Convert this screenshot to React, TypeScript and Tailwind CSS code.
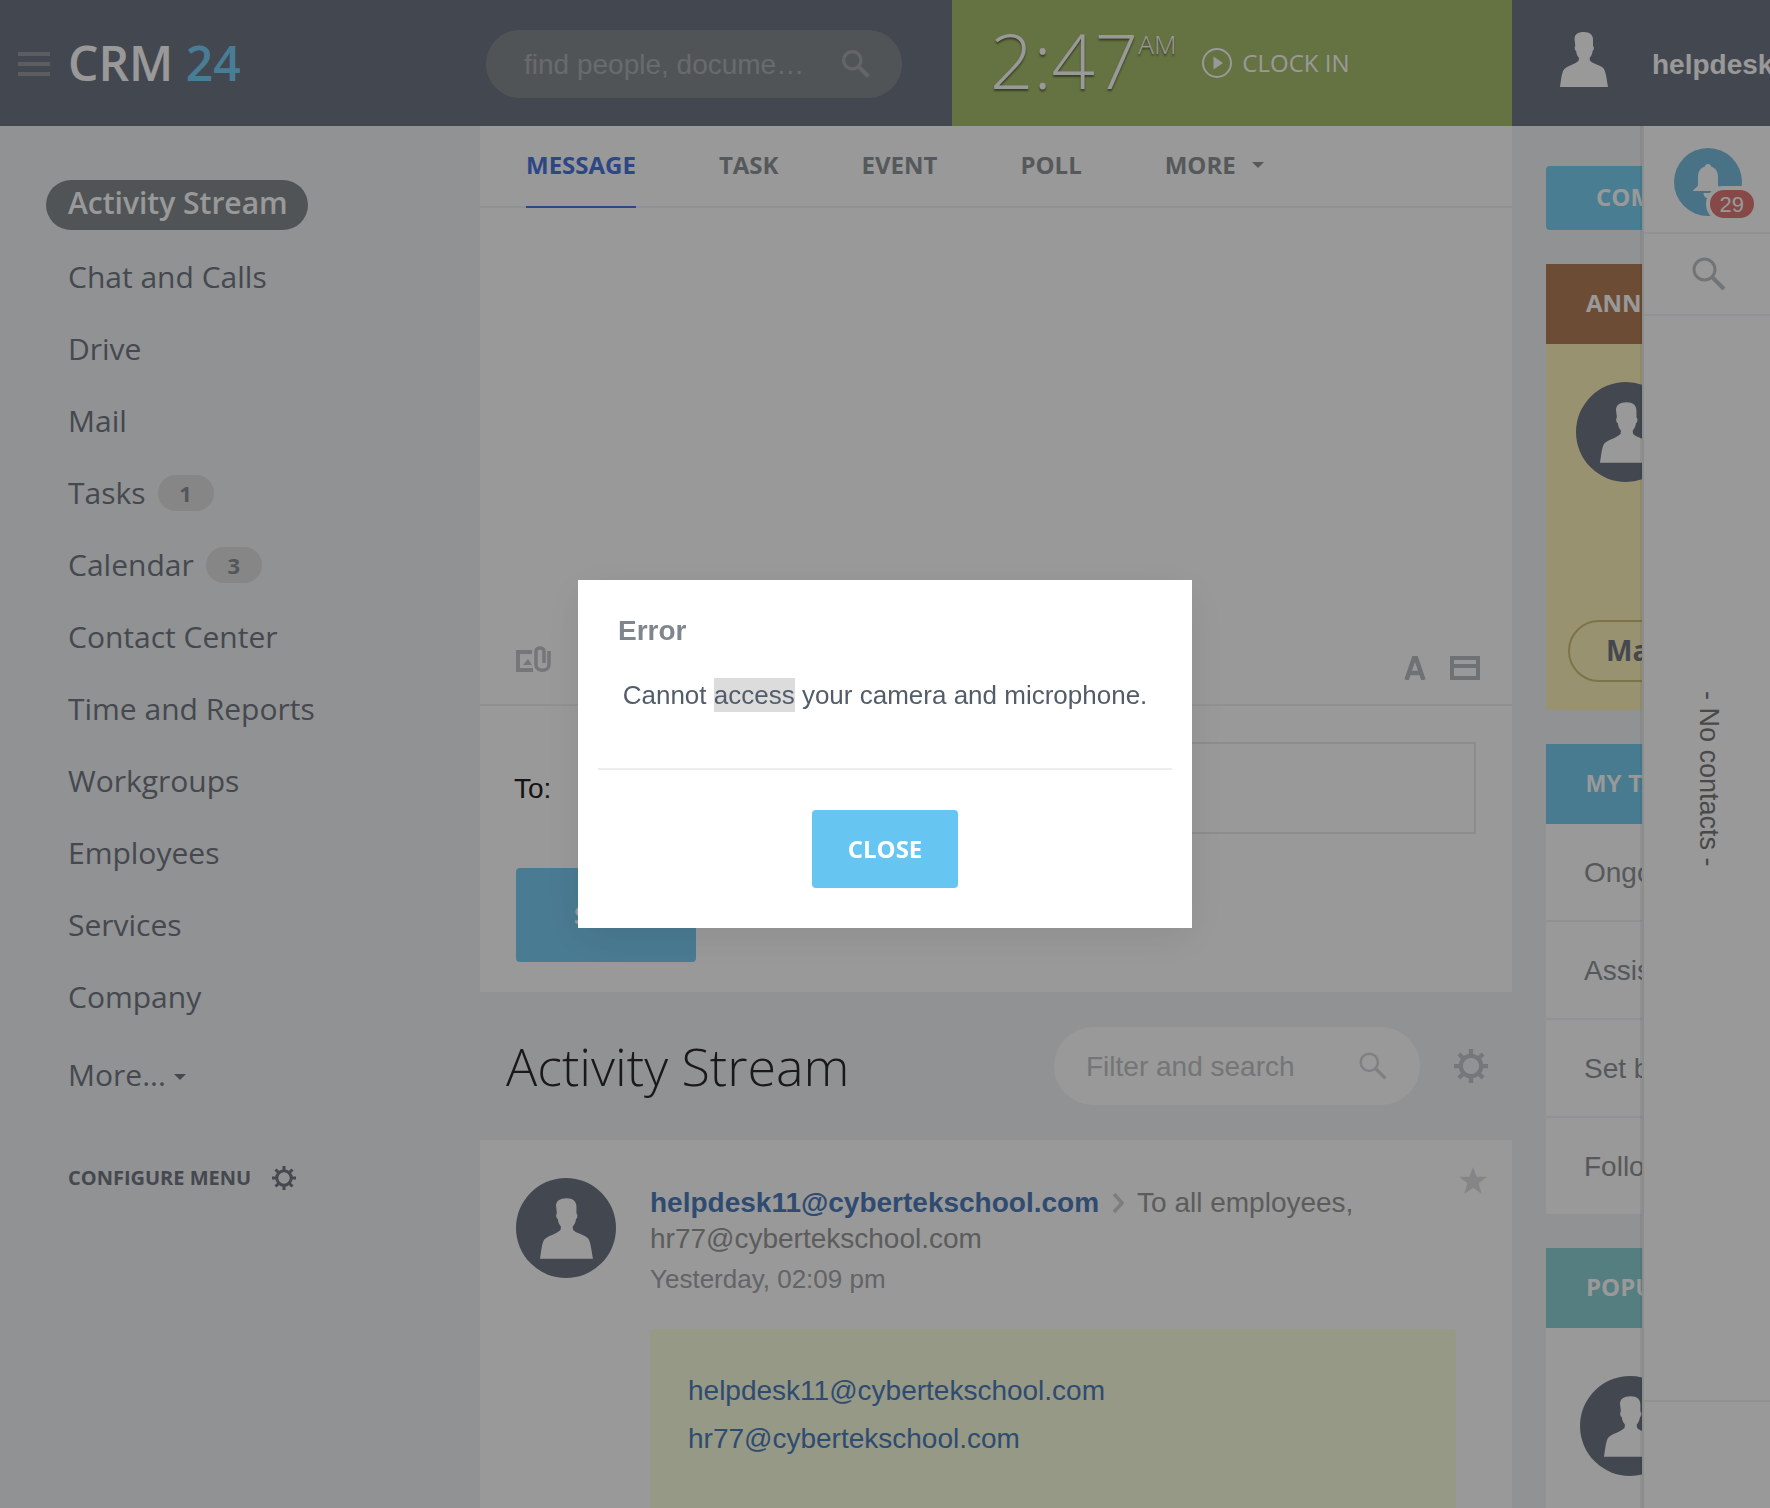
import React from "react";

function Person({ className }: { className: string }) {
  return (
    <svg viewBox="0 0 48 55" className={className} fill="currentColor" aria-hidden="true">
      <path d="M14.5 7C14.5 2.5 18 0 24 0s9 3 9 7.5V14c1.300.6 1.200 4.200-.4 5-.3 3-1.400 5-3 7l.3 2.600c2.500 3.400 10.600 4.200 13.900 8.200C46 40 47 50 48 55H0c.9-5 1.500-13.500 3.600-17C6 34.300 14 33 18.600 28.800l.4-2.800c-1.600-2-2.600-4-2.900-7-1.600-.8-1.900-4.200-.8-5z" />
    </svg>
  );
}

function Avatar() {
  return (
    <div className="flex size-[100px] shrink-0 items-center justify-center rounded-full bg-[#717784] text-white">
      <Person className="h-[61px] w-[53px]" />
    </div>
  );
}

function Gear({ className }: { className: string }) {
  return (
    <svg viewBox="0 0 24 24" className={className} fill="none" stroke="currentColor" aria-hidden="true">
      <circle cx="12" cy="12" r="7.200" strokeWidth="3" />
      <path
        strokeWidth="3"
        d="M12 0v4M12 20v4M0 12h4M20 12h4M3.500 3.500l2.800 2.800M17.700 17.700l2.800 2.800M3.500 20.500l2.800-2.800M17.700 6.300l2.800-2.800"
      />
    </svg>
  );
}

function Magnifier({ className, thick }: { className: string; thick: number }) {
  return (
    <svg viewBox="0 0 34 34" className={className} fill="none" stroke="currentColor" strokeWidth={thick} aria-hidden="true">
      <circle cx="12.500" cy="12.500" r="10.500" />
      <path d="M20 20l12 12" strokeWidth={thick + 1} />
    </svg>
  );
}

function Caret({ className }: { className: string }) {
  return (
    <svg viewBox="0 0 12 6" className={className} fill="currentColor" aria-hidden="true">
      <path d="M0 0h12L6 6z" />
    </svg>
  );
}

const menu: { label: string; count?: number }[] = [
  { label: "Chat and Calls" },
  { label: "Drive" },
  { label: "Mail" },
  { label: "Tasks", count: 1 },
  { label: "Calendar", count: 3 },
  { label: "Contact Center" },
  { label: "Time and Reports" },
  { label: "Workgroups" },
  { label: "Employees" },
  { label: "Services" },
  { label: "Company" },
];

function Header() {
  return (
    <header className="flex h-[126px] shrink-0 bg-[#717784]">
      <div className="flex min-w-0 flex-1 items-center">
        <div className="flex w-[486px] shrink-0 items-center gap-[18px] pl-[18px]">
          <button aria-label="Toggle menu" className="flex w-8 flex-col gap-1.5 pt-0.5">
            <span className="h-1 w-8 bg-[#9a9ca2]" />
            <span className="h-1 w-8 bg-[#9a9ca2]" />
            <span className="h-1 w-8 bg-[#9a9ca2]" />
          </button>
          <a href="#home" className="font-['Open_Sans',sans-serif] text-[48px] leading-[64px] font-semibold text-white">
            CRM <span className="text-[#7bd0f9]">24</span>
          </a>
        </div>
        <div className="mt-0.5 mr-[50px] flex h-[68px] min-w-0 flex-1 items-center rounded-full bg-[#888d92] pr-8 pl-[38px] text-[#a5a9ac]">
          <input
            aria-label="Search"
            placeholder="find people, docume…"
            className="min-w-0 flex-1 pt-0.5 text-[28px] outline-none placeholder:text-[#aeb3b6]"
          />
          <Magnifier className="size-7 shrink-0" thick={4} />
        </div>
      </div>
      <div className="flex w-[560px] shrink-0 items-center bg-[#a8be6d] pl-[38px] font-['Open_Sans',sans-serif] text-white [text-shadow:0_2px_2px_rgba(0,0,0,0.45)]">
        <span className="pb-1.5 text-[76px] leading-[120px] font-light">2:47</span>
        <span className="mb-[38px] text-[26px] leading-8 font-light">AM</span>
        <button className="ml-[26px] flex items-center gap-2.5 text-2xl leading-8">
          <svg viewBox="0 0 30 30" className="size-[30px]" fill="none" aria-hidden="true">
            <circle cx="15" cy="15" r="14" stroke="white" strokeWidth="2" />
            <path d="M11.500 8.500v13l9.500-6.500z" fill="white" />
          </svg>
          CLOCK IN
        </button>
      </div>
      <div className="flex w-[258px] shrink-0 items-center overflow-hidden pl-12 text-white">
        <Person className="mb-[7px] h-[55px] w-12 shrink-0" />
        <a href="#profile" className="ml-11 pt-[3px] text-[28px] leading-8 font-bold whitespace-nowrap">
          helpdesk11@cybertekschool.com
        </a>
      </div>
    </header>
  );
}

function Sidebar() {
  return (
    <nav className="w-[480px] shrink-0 pt-[54px] pl-[46px] font-['Open_Sans',sans-serif] text-[30px] leading-[40px] text-[#747984]">
      <a href="#stream" className="flex h-[50px] w-fit items-start rounded-full bg-[#888d92] pt-[3px] pr-5 pl-[22px] font-semibold text-white">
        Activity Stream
      </a>
      <ul className="mt-[11px]">
        {menu.map((item) => (
          <li key={item.label} className="flex h-[72px] items-center gap-3 pl-[22px]">
            <a href={"#" + item.label}>{item.label}</a>
            {item.count && (
              <span className="flex h-9 w-14 items-center justify-center rounded-full bg-[#dfe0e2] text-[22px] font-bold text-[#8b9096]">
                {item.count}
              </span>
            )}
          </li>
        ))}
      </ul>
      <button className="mt-[22px] ml-[22px] flex items-center gap-2">
        More...
        <Caret className="mt-1 h-1.5 w-3" />
      </button>
      <button className="mt-[68px] ml-[22px] flex items-center gap-[21px] text-xl font-bold">
        <span className="pt-px">CONFIGURE MENU</span>
        <Gear className="size-6" />
      </button>
    </nav>
  );
}

function Composer() {
  return (
    <section className="bg-white">
      <div className="flex h-[82px] gap-[83px] border-b-2 border-[#f1f2f3] pl-[46px] font-['Open_Sans',sans-serif] text-2xl leading-[76px] font-bold text-[#8f9498]">
        <button className="-mb-0.5 border-b-2 border-[#4b76dc] pb-0.5 text-[#4b76dc]">MESSAGE</button>
        <button className="pb-0.5">TASK</button>
        <button className="pb-0.5">EVENT</button>
        <button className="pb-0.5">POLL</button>
        <button className="flex items-center gap-4 pb-0.5">
          MORE
          <Caret className="h-1.5 w-3" />
        </button>
      </div>
      <div className="flex h-[498px] items-end justify-between border-b-2 border-[#f0f1f2] pr-8 pb-6 pl-9">
        <button aria-label="Attach" className="mb-1.5 text-[#c2c5ca]">
          <svg viewBox="0 0 35 28" className="h-7 w-[35px]" fill="none" stroke="currentColor" strokeWidth="4" aria-hidden="true">
            <path d="M16 6H2v18h15" />
            <path d="M7 19l5-6 4 6z" fill="currentColor" stroke="none" />
            <path d="M28 17V5c0-4-8-4-8 0v14c0 7 13 7 13 0V5" strokeWidth="3.500" />
          </svg>
        </button>
        <div className="flex items-end gap-6 text-[#b9bec4]">
          <button aria-label="Text format">
            <svg viewBox="0 0 22 24" className="h-6 w-[22px]" fill="none" stroke="currentColor" strokeWidth="4.500" aria-hidden="true">
              <path d="M2.500 24L10 2h2l7.500 22M5.500 17h11" />
            </svg>
          </button>
          <button aria-label="Visual editor">
            <svg viewBox="0 0 30 24" className="h-6 w-[30px]" fill="none" stroke="currentColor" strokeWidth="4" aria-hidden="true">
              <path d="M2 2h26v20H2zM2 10h26" />
            </svg>
          </button>
        </div>
      </div>
      <div className="px-9 pt-9 pb-[30px]">
        <div className="-ml-0.5 flex items-center">
          <label htmlFor="to" className="w-[88px] pt-0.5 text-[28px] leading-8 text-[#222]">
            To:
          </label>
          <input id="to" className="h-[92px] min-w-0 flex-1 border-2 border-[#e8e9ea]" />
        </div>
        <button className="mt-[34px] h-[94px] w-[180px] rounded bg-[#7bcdf3] font-['Open_Sans',sans-serif] text-2xl font-bold text-white">
          SEND
        </button>
      </div>
    </section>
  );
}

function Stream() {
  return (
    <>
      <div className="flex h-[148px] items-center pr-6 pl-[26px]">
        <h1 className="mr-auto font-['Open_Sans',sans-serif] text-[52px] leading-[72px] font-light text-[#2a2a2a]">Activity Stream</h1>
        <div className="flex h-[78px] w-[366px] items-center rounded-full bg-white pr-[33px] pl-8 text-[#d4d6d8]">
          <input
            aria-label="Filter and search"
            placeholder="Filter and search"
            className="min-w-0 flex-1 pt-0.5 text-[28px] outline-none placeholder:text-[#c2c4c6]"
          />
          <Magnifier className="size-7" thick={3} />
        </div>
        <button aria-label="Stream settings" className="ml-[34px] text-[#c5c7cb]">
          <Gear className="size-[34px]" />
        </button>
      </div>
      <article className="flex flex-1 gap-[34px] bg-white pt-[38px] pl-9">
        <Avatar />
        <div className="flex flex-1 flex-col">
          <div className="flex justify-between pr-[25px]">
            <div className="pt-[7px] text-[28px] leading-9 text-[#9a9a9a]">
              <p>
                <a href="#helpdesk" className="font-bold text-[#4f7dbc]">helpdesk11@cybertekschool.com</a>
                <svg viewBox="0 0 12 20" className="mx-[13px] inline h-5 w-3 align-[-1px]" fill="none" stroke="#cfd1d4" strokeWidth="3.500" aria-hidden="true">
                  <path d="M2 1l8 9-8 9" />
                </svg>
                To all employees,
              </p>
              <p>hr77@cybertekschool.com</p>
              <p className="mt-1 text-[26px] text-[#a3a7ac]">Yesterday, 02:09 pm</p>
            </div>
            <button aria-label="Add to favorites" className="-mt-[11px] h-[27px] text-[#dcdee1]">
              <svg viewBox="0 0 28 27" className="h-[27px] w-7" fill="currentColor" aria-hidden="true">
                <path d="M14 0l3.600 9.800H28l-8.300 6.400L22.700 27 14 20.700 5.300 27l3-10.800L0 9.800h10.400z" />
              </svg>
            </button>
          </div>
          <div className="mt-8 mr-[56px] flex flex-1 flex-col rounded-t bg-[#f9ffde] px-[38px] pt-[38px] text-[28px] leading-[48px] text-[#4f7dbc]">
            <a href="#helpdesk">helpdesk11@cybertekschool.com</a>
            <a href="#hr">hr77@cybertekschool.com</a>
          </div>
        </div>
      </article>
    </>
  );
}

function Widgets() {
  return (
    <aside className="flex w-[130px] shrink-0 flex-col gap-[34px] overflow-hidden pt-10 pl-[34px] font-['Open_Sans',sans-serif] text-2xl font-bold whitespace-nowrap text-white">
      <button className="h-16 shrink-0 rounded-l-sm bg-[#7bd0f3] pb-0.5 pl-[50px] text-left">COMPOSE</button>
      <section className="h-[446px] shrink-0 bg-[#fff3bc]">
        <h2 className="h-20 bg-[#b47f58] pl-10 leading-[78px]">ANNOUNCEMENTS</h2>
        <div className="pt-[38px] pl-[30px]">
          <Avatar />
        </div>
        <button className="mt-[138px] ml-[22px] h-[62px] rounded-full border-2 border-[#cfc27a] px-9 text-[28px] text-[#747984]">Make</button>
      </section>
      <section className="bg-white">
        <h2 className="h-20 bg-[#7bcdf0] pl-10 font-['Liberation_Sans',sans-serif] leading-[80px]">MY TASKS</h2>
        <ul className="font-['Liberation_Sans',sans-serif] text-[28px] leading-[94px] font-normal text-[#8f9498]">
          {["Ongoing", "Assisting", "Set by me", "Following"].map((name) => (
            <li key={name} className="border-b-2 border-[#f1f2f3] pt-0.5 pl-[38px] last:border-0">
              <a href={"#" + name}>{name}</a>
            </li>
          ))}
        </ul>
      </section>
      <section className="flex-1 bg-white">
        <h2 className="h-20 bg-[#8ed2d8] pl-10 leading-[78px]">POPULAR POSTS</h2>
        <div className="pt-12 pl-[34px]">
          <Avatar />
        </div>
      </section>
    </aside>
  );
}

function ContactBar() {
  return (
    <div className="z-10 flex w-32 shrink-0 flex-col border-l-2 border-[#e8eaed] bg-white shadow-[-2px_0_0_rgba(0,0,0,0.06)]">
      <div className="flex h-[108px] items-start justify-center border-b-2 border-[#f1f2f3] pt-[22px] pl-0.5">
        <button aria-label="Notifications" className="relative flex size-[68px] items-center justify-center rounded-full bg-[#7bbfe0] text-white">
          <svg viewBox="0 0 32 36" className="h-9 w-8" fill="currentColor" aria-hidden="true">
            <path d="M16 0c1.800 0 3 1 3 2.500 5 1.500 7 5.500 7 10.500v8c0 2 4 3.500 5 6H1c1-2.500 5-4 5-6v-8c0-5 2-9 7-10.500C13 1 14.200 0 16 0zM11.500 29h9c0 3-2 5-4.500 5s-4.500-2-4.500-5z" />
          </svg>
          <span className="absolute -right-4 -bottom-1.5 flex h-9 items-center rounded-full border-4 border-white bg-[#df7a78] px-2.5 text-[22px]">
            29
          </span>
        </button>
      </div>
      <button aria-label="Find contact" className="flex h-[82px] items-center justify-center border-b-2 border-[#f1f2f3] pl-1 text-[#bfc3c6]">
        <Magnifier className="size-[34px]" thick={3} />
      </button>
      <div className="flex flex-1 items-center justify-center pb-[158px] pl-1">
        <span className="text-[27px] leading-8 text-[#7a7a7a] [writing-mode:vertical-rl]">- No contacts -</span>
      </div>
      <div className="h-[108px] border-t-2 border-[#f1f2f3]" />
    </div>
  );
}

export default function App() {
  return (
    <div className="flex h-screen flex-col overflow-hidden bg-[#f1f3f5] font-['Liberation_Sans',Arial,sans-serif]">
      <Header />
      <div className="flex min-h-0 flex-1">
        <Sidebar />
        <main className="flex min-w-0 flex-1 flex-col">
          <Composer />
          <Stream />
        </main>
        <Widgets />
        <ContactBar />
      </div>
      <div className="fixed inset-0 z-20 flex items-center justify-center bg-black/40">
        <div
          role="dialog"
          aria-modal="true"
          aria-labelledby="error-title"
          className="w-[614px] bg-white px-5 pt-[33px] pb-10 shadow-[0_10px_40px_rgba(0,0,0,0.08)]"
        >
          <h2 id="error-title" className="px-5 text-[28px] leading-9 font-bold text-[#80868e]">
            Error
          </h2>
          <p className="mt-7 border-b-2 border-[#ededed] pb-[55px] text-center text-[26px] leading-[36px] text-[#535c69]">
            Cannot <mark className="bg-[#dcdcdc] py-0.5 text-inherit">access</mark> your camera and microphone.
          </p>
          <button className="mx-auto mt-10 block h-[78px] rounded bg-[#67c5f2] px-9 font-['Open_Sans',sans-serif] text-2xl font-bold text-white">
            CLOSE
          </button>
        </div>
      </div>
    </div>
  );
}
